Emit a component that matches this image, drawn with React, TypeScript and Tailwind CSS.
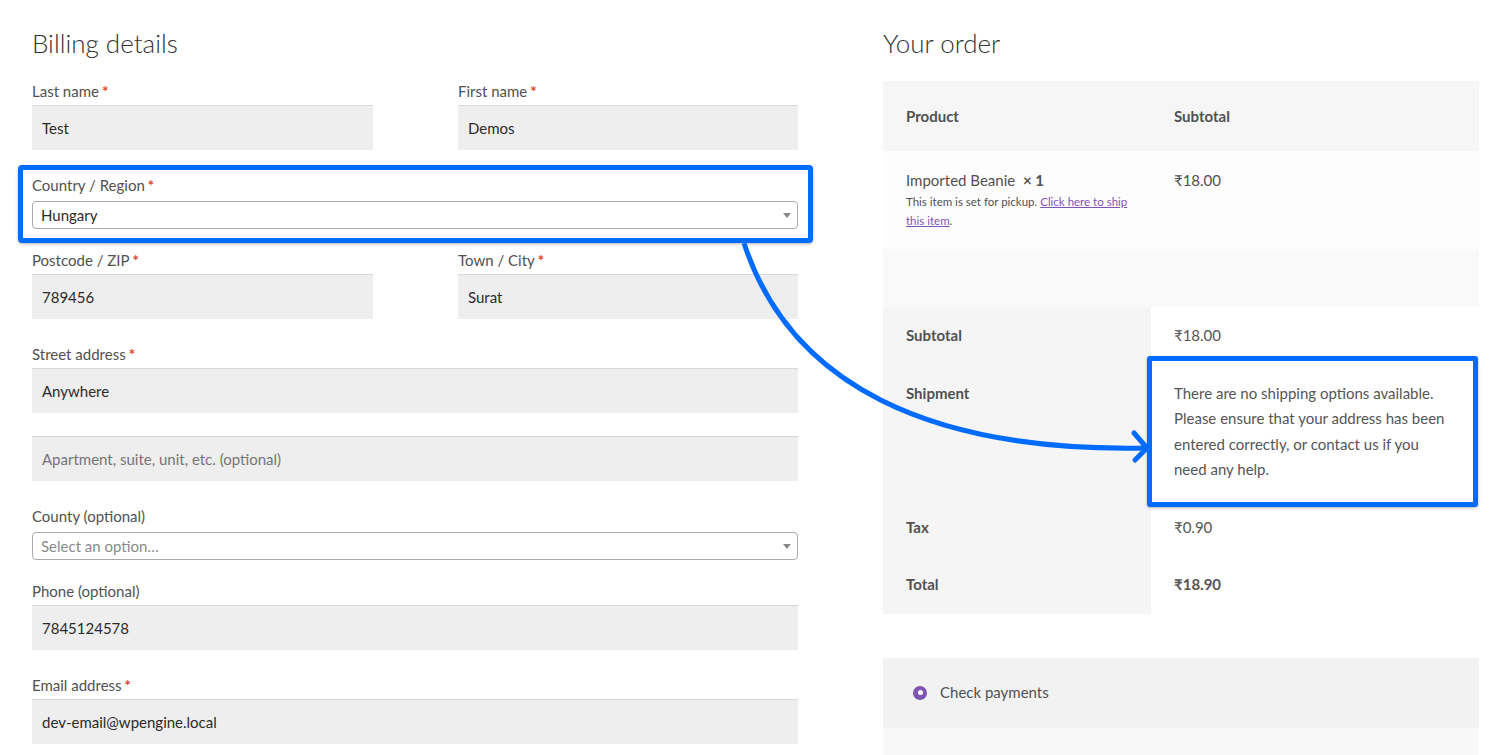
import React from "react";

const FONT = "font-['Lato','Noto_Sans',sans-serif]";

function Req() {
  return <span className="text-[#e2401c] font-bold ml-[3px]">*</span>;
}

function Label({ text, req }: { text: string; req?: boolean }) {
  return (
    <div className="text-[15px] leading-[24px] text-[#515151]">
      {text}
      {req && <Req />}
    </div>
  );
}

function TextField({
  label,
  value,
  placeholder,
  req,
  className = "",
  noLabel,
}: {
  label?: string;
  value?: string;
  placeholder?: string;
  req?: boolean;
  className?: string;
  noLabel?: boolean;
}) {
  return (
    <div className={className}>
      {!noLabel && label && <Label text={label} req={req} />}
      <div
        className={`${noLabel ? "" : "mt-[2px]"} h-[45px] bg-[#eeeeee] border-t border-[#d8d8d8] flex items-center px-[10px] text-[15px] ${
          value ? "text-[#2b2b2b]" : "text-[#757575]"
        }`}
      >
        {value ?? placeholder}
      </div>
    </div>
  );
}

function SelectField({
  label,
  value,
  placeholder,
  req,
  className = "",
}: {
  label: string;
  value?: string;
  placeholder?: string;
  req?: boolean;
  className?: string;
}) {
  return (
    <div className={className}>
      <Label text={label} req={req} />
      <div className="mt-[4px] h-[28px] bg-white border border-[#aaaaaa] rounded-[4px] flex items-center justify-between pl-[8px] pr-[5px]">
        <span className={`text-[15px] ${value ? "text-[#2b2b2b]" : "text-[#8a8a8a]"}`}>
          {value ?? placeholder}
        </span>
        <svg width="10" height="6" viewBox="0 0 10 6">
          <path d="M1 1 L9 1 L5 6 Z" fill="#888888" />
        </svg>
      </div>
    </div>
  );
}

function Billing() {
  return (
    <div className="w-[766px] shrink-0">
      <h3 className="text-[26px] leading-[34px] font-light text-[#333333]">Billing details</h3>
      <div className="mt-[19px] flex gap-[85px]">
        <TextField className="w-[341px]" label="Last name" req value="Test" />
        <TextField className="w-[340px]" label="First name" req value="Demos" />
      </div>
      <SelectField className="mt-[23px]" label="Country / Region" req value="Hungary" />
      <div className="mt-[19px] flex gap-[85px]">
        <TextField className="w-[341px]" label="Postcode / ZIP" req value="789456" />
        <TextField className="w-[340px]" label="Town / City" req value="Surat" />
      </div>
      <TextField className="mt-[23px]" label="Street address" req value="Anywhere" />
      <TextField
        className="mt-[23px]"
        noLabel
        placeholder="Apartment, suite, unit, etc. (optional)"
      />
      <SelectField className="mt-[23px]" label="County (optional)" placeholder="Select an option…" />
      <TextField className="mt-[19px]" label="Phone (optional)" value="7845124578" />
      <TextField className="mt-[23px]" label="Email address" req value="dev-email@wpengine.local" />
    </div>
  );
}

function FootRow({
  label,
  children,
  strong,
}: {
  label: string;
  children: React.ReactNode;
  strong?: boolean;
}) {
  return (
    <div className="flex">
      <div className="w-[268px] shrink-0 bg-[#f5f5f5] px-[23px] py-[16px] text-[15px] leading-[25.5px] font-bold text-[#515151]">
        {label}
      </div>
      <div
        className={`flex-1 bg-white px-[23px] py-[16px] text-[15px] leading-[25.5px] text-[#555555] ${
          strong ? "font-bold" : ""
        }`}
      >
        {children}
      </div>
    </div>
  );
}

function Order() {
  return (
    <div className="w-[596px] shrink-0 ml-[85px]">
      <h3 className="text-[26px] leading-[34px] font-light text-[#333333]">Your order</h3>
      <div className="mt-[21px]">
        <div className="flex h-[70px] items-center bg-[#f6f6f6] text-[15px] font-bold text-[#515151]">
          <div className="w-[268px] px-[23px]">Product</div>
          <div className="px-[23px]">Subtotal</div>
        </div>
        <div className="flex h-[98px] bg-[#fdfdfd] text-[#515151]">
          <div className="w-[268px] px-[23px] pt-[17px]">
            <div className="text-[15px] leading-[24px]">
              Imported Beanie <span className="font-bold ml-[4px]">× 1</span>
            </div>
            <div className="text-[11.5px] leading-[19px]">
              This item is set for pickup.{" "}
              <span className="text-[#7f54b3] underline">Click here to ship</span>
              <br />
              <span className="text-[#7f54b3] underline">this item</span>.
            </div>
          </div>
          <div className="px-[23px] pt-[17px] text-[15px] leading-[24px]">₹18.00</div>
        </div>
        <div className="h-[58px] bg-[#f9f9f9]" />
        <FootRow label="Subtotal">₹18.00</FootRow>
        <FootRow label="Shipment">
          There are no shipping options available.
          <br />
          Please ensure that your address has been
          <br />
          entered correctly, or contact us if you
          <br />
          need any help.
        </FootRow>
        <FootRow label="Tax">₹0.90</FootRow>
        <FootRow label="Total" strong>
          ₹18.90
        </FootRow>
      </div>
      <div className="mt-[44px] h-[70px] bg-[#f2f2f2] flex items-center pl-[30px]">
        <span className="w-[14px] h-[14px] rounded-full bg-[#7f54b3] flex items-center justify-center">
          <span className="w-[5px] h-[5px] rounded-full bg-white" />
        </span>
        <span className="ml-[13px] text-[15px] text-[#515151]">Check payments</span>
      </div>
      <div className="h-[40px] bg-[#f8f8f8]" />
    </div>
  );
}

export default function App() {
  return (
    <div className={`relative w-[1509px] h-[755px] overflow-hidden bg-white ${FONT}`}>
      <div className="flex pl-[32px] pt-[26px]">
        <Billing />
        <Order />
      </div>

      {/* annotations */}
      <div className="absolute left-[18px] top-[165px] w-[795px] h-[78px] border-[5px] border-[#006cff] rounded-[4px] shadow-[0_1px_3px_rgba(0,0,0,0.3)] pointer-events-none" />
      <div className="absolute left-[1147px] top-[356px] w-[331px] h-[151px] border-[5px] border-[#006cff] rounded-[3px] shadow-[0_1px_3px_rgba(0,0,0,0.3)] pointer-events-none" />
      <svg
        className="absolute left-0 top-0 pointer-events-none"
        width="1509"
        height="755"
        viewBox="0 0 1509 755"
      >
        <path
          d="M744 243 C790 385 930 452 1145 448"
          fill="none"
          stroke="#006cff"
          strokeWidth="5"
        />
        <path
          d="M1134 433 L1147 448 L1135 460"
          fill="none"
          stroke="#006cff"
          strokeWidth="5"
          strokeLinecap="round"
          strokeLinejoin="round"
        />
      </svg>
    </div>
  );
}
